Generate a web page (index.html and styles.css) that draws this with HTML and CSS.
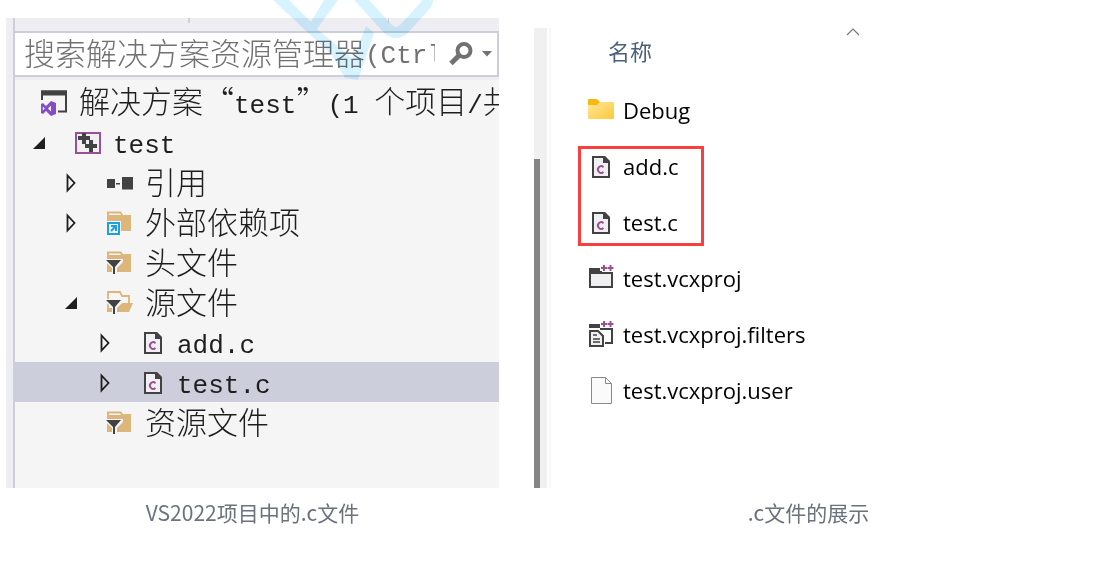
FILE: index.html
```html
<!DOCTYPE html>
<html lang="zh-CN">
<head>
    <meta charset="UTF-8">
    <meta name="viewport" content="width=device-width, initial-scale=1.0">
    <title>VS2022 .c文件</title>
    <link rel="stylesheet" href="styles.css">
</head>
<body>
    <!-- shared icons -->
    <svg class="sprite" aria-hidden="true">
        <symbol id="closed" viewBox="0 0 14 20"><path d="M3.500 2.500v15l7-7.500z" fill="none" stroke="#1e1e1e" stroke-width="1.800"/></symbol>
        <symbol id="open" viewBox="0 0 14 14"><path d="M13 1v12H1z" fill="#1e1e1e"/></symbol>
        <symbol id="cfile" viewBox="0 0 20 24">
            <path d="M2 2h11l5 5v15H2z" fill="#f0eff1" stroke="#424242" stroke-width="2"/>
            <path d="M12 1h2l5 5v2h-7z" fill="#424242"/>
            <path d="M12.500 12.200a3.300 3.300 0 1 0 0 4.800" fill="none" stroke="#9b4f96" stroke-width="1.900"/>
        </symbol>
        <symbol id="filter" viewBox="0 0 26 26">
            <path d="M1 6V1.500h14L17 4h8v18H1z" fill="#dcb67a"/>
            <path d="M3 3.500h11l1 1.500H3z" fill="#f5f5f5"/>
            <path d="M0 9h17v3l-6 6v7H6v-7l-6-6z" fill="#f5f5f5"/>
            <path d="M0 10h15l-6 7v7H7v-7z" fill="#424242"/>
        </symbol>
    </svg>

    <main class="gallery">
        <figure>
            <div class="solution">
                <div class="toolbar"></div>
                <div class="search">
                    <input id="search" type="text">
                    <label for="search">搜索解决方案资源管理器<span class="mono">(Ctrl+;)</span></label>
                    <button type="button" aria-label="搜索">
                        <svg width="26" height="26" viewBox="0 0 26 26"><circle cx="16" cy="9.500" r="6.500" fill="none" stroke="#717171" stroke-width="4"/><path d="M11.500 14L3 22.500" stroke="#717171" stroke-width="5"/></svg>
                    </button>
                    <button type="button" aria-label="搜索选项">
                        <svg width="10" height="6" viewBox="0 0 10 6"><path d="M0 0h10L5 5.500z" fill="#717171"/></svg>
                    </button>
                </div>
                <ul class="tree">
                    <li class="root">
                        <svg width="28" height="28" viewBox="0 0 28 28"><path d="M2 14V2.500h24v20h-8" fill="none" stroke="#424242" stroke-width="2"/><path d="M1 1.500h26v5H1z" fill="#424242"/><path d="M0 11h17v16H0z" fill="#f5f5f5"/><path d="M11 12l5 2v11l-5 2-5-5-3 3-2-1v-9l2-1 3 3zM11 16.500l-3 3 3 3zM2.800 17.500v4l2-2z" fill="#854cc7" fill-rule="evenodd"/></svg>
                        <span class="name">解决方案“<span class="mono">test</span>”<span class="mono">(1 </span>个项目<span class="mono">/</span>共</span>
                    </li>
                    <li class="level-1">
                        <svg class="arrow" width="14" height="14"><use href="#open"/></svg>
                        <svg width="28" height="24" viewBox="0 0 28 24"><path d="M2 2h24v20H2z" fill="#f0eff1" stroke="#9b4f96" stroke-width="2"/><path d="M10 2v11M4 7h12M17 9v12M11 15h12" stroke="#424242" stroke-width="4"/></svg>
                        <span class="name"><span class="mono">test</span></span>
                    </li>
                    <li class="level-2">
                        <svg class="arrow" width="14" height="20"><use href="#closed"/></svg>
                        <svg width="28" height="26" viewBox="0 0 28 26"><path d="M1 9h8v9H1zM10 13h4v1.500h-4zM16 7h11v12.500H16z" fill="#424242"/></svg>
                        <span class="name">引用</span>
                    </li>
                    <li class="level-2">
                        <svg class="arrow" width="14" height="20"><use href="#closed"/></svg>
                        <svg width="28" height="26" viewBox="0 0 28 26"><path d="M1 10V1.500h14L17 5h8v16H1z" fill="#dcb67a"/><path d="M3 3.500h11l1 1.500H3zM0 11h15v14H0z" fill="#f5f5f5"/><path d="M2 13h11v11H2z" fill="#f5f5f5" stroke="#1ba1e2" stroke-width="2"/><path d="M5 16h5v5M10 16l-5 5" fill="none" stroke="#1ba1e2" stroke-width="2"/></svg>
                        <span class="name">外部依赖项</span>
                    </li>
                    <li class="level-2">
                        <span class="arrow"></span>
                        <svg width="28" height="26" viewBox="0 0 28 26"><use href="#filter" width="26" height="26"/></svg>
                        <span class="name">头文件</span>
                    </li>
                    <li class="level-2">
                        <svg class="arrow" width="14" height="14"><use href="#open"/></svg>
                        <svg width="28" height="26" viewBox="0 0 28 26"><path d="M2 20V2h12l2 4h7v8" fill="none" stroke="#dcb67a" stroke-width="1.800"/><path d="M10 13h17l-4 9H1v-4h8z" fill="#dcb67a"/><path d="M0 9h17v3l-6 6v7H6v-7l-6-6z" fill="#f5f5f5"/><path d="M0 10h15l-6 7v7H7v-7z" fill="#424242"/></svg>
                        <span class="name">源文件</span>
                    </li>
                    <li class="level-3">
                        <svg class="arrow" width="14" height="20"><use href="#closed"/></svg>
                        <svg width="26" height="24"><use href="#cfile" x="3" width="20" height="24"/></svg>
                        <span class="name"><span class="mono">add.c</span></span>
                    </li>
                    <li class="level-3 selected">
                        <svg class="arrow" width="14" height="20"><use href="#closed"/></svg>
                        <svg width="26" height="24"><use href="#cfile" x="3" width="20" height="24"/></svg>
                        <span class="name"><span class="mono">test.c</span></span>
                    </li>
                    <li class="level-2">
                        <span class="arrow"></span>
                        <svg width="28" height="26" viewBox="0 0 28 26"><use href="#filter" width="26" height="26"/></svg>
                        <span class="name">资源文件</span>
                    </li>
                </ul>
            </div>
            <figcaption>VS2022项目中的.c文件</figcaption>
        </figure>

        <figure>
            <div class="explorer">
                <div class="scrollbar"><div class="thumb"></div></div>
                <div class="files">
                    <div class="column-head">
                        <span>名称</span>
                        <svg width="14" height="9" viewBox="0 0 14 9"><path d="M1 7l6-6 6 6" fill="none" stroke="#777" stroke-width="1.200"/></svg>
                    </div>
                    <ul>
                        <li>
                            <svg width="26" height="28" viewBox="0 0 26 28"><defs><linearGradient id="folder" x2="1" y2="1"><stop offset="0" stop-color="#ffe69c"/><stop offset="1" stop-color="#fcc938"/></linearGradient></defs><path d="M0 3q0-1 1-1h8l3 3v4H0z" fill="#f8b80e"/><path d="M0 8h9l3-3h13q1 0 1 1v15q0 1-1 1H1q-1 0-1-1z" fill="url(#folder)"/></svg>
                            Debug
                        </li>
                    </ul>
                    <ul class="marked">
                        <li><svg width="26" height="24"><use href="#cfile" x="3" width="20" height="24"/></svg>add.c</li>
                        <li><svg width="26" height="24"><use href="#cfile" x="3" width="20" height="24"/></svg>test.c</li>
                    </ul>
                    <ul>
                        <li>
                            <svg width="26" height="28" viewBox="0 0 26 28"><path d="M2 8h22v14H2z" fill="#f0eff1" stroke="#424242" stroke-width="2"/><path d="M1 3h11v3h2v3H1z" fill="#424242"/><path d="M12 0h14v6H12z" fill="#fff"/><path d="M16 0v6M13 3h6M22.500 0v6M19.500 3h6" stroke="#9b4f96" stroke-width="2"/></svg>
                            test.vcxproj
                        </li>
                        <li>
                            <svg width="26" height="28" viewBox="0 0 26 28"><path d="M1 3h11v4H1z" fill="#424242"/><path d="M12 8h12v14h-7" fill="none" stroke="#424242" stroke-width="2"/><path d="M2 10h8l5 5v10H2z" fill="#f0eff1" stroke="#424242" stroke-width="2"/><path d="M5 14h4M5 18h7M5 21h7" stroke="#424242" stroke-width="1.500"/><path d="M16 0v6M13 3h6M22.500 0v6M19.500 3h6" stroke="#9b4f96" stroke-width="2"/></svg>
                            test.vcxproj.filters
                        </li>
                        <li>
                            <svg width="26" height="28" viewBox="0 0 26 28"><path d="M3.500 .5h14l6 6v20h-20z" fill="#fafafa" stroke="#8a8a8a"/><path d="M17.500 .5v6h6" fill="none" stroke="#8a8a8a"/></svg>
                            test.vcxproj.user
                        </li>
                    </ul>
                </div>
            </div>
            <figcaption>.c文件的展示</figcaption>
        </figure>
    </main>

    <svg class="watermark" width="190" height="82" viewBox="0 0 190 82" aria-hidden="true">
        <path d="M13 0h16l22 22L64 0h14L57 29l36 30 13-33 8 7-16 47-13-2-13-23z" fill="#d6f3ff"/>
        <path d="M98-4l29 32q9 9 18 0l18-20q6-5 4-12" fill="none" stroke="#d6f3ff" stroke-width="11"/>
    </svg>
</body>
</html>
```
FILE: styles.css
```css
* {
    box-sizing: border-box;
}

body {
    position: relative;
    margin: 0;
    background: #fff;
    font-family: "Noto Sans CJK SC", sans-serif;
}

.sprite {
    display: none;
}

.gallery {
    display: grid;
    grid-template-columns: 493fr 549fr;
    align-items: end;
    gap: 35px;
    padding: 18px 33px 0 6px;
}

figure {
    margin: 0;
    min-width: 0;
}

figcaption {
    padding-top: 9px;
    text-align: center;
    font-size: 21px;
    line-height: 30px;
    color: #6b727c;
}

ul {
    list-style: none;
    margin: 0;
    padding: 0;
}

svg {
    flex: none;
}

/* Solution Explorer */
.solution {
    padding-left: 7px;
    padding-bottom: 46px;
    background: linear-gradient(to right, #eeeef2 7px, #cccedb 7px, #cccedb 9px, #f5f5f5 9px);
    font-size: 31px;
    font-weight: 300;
    color: #1e1e1e;
}

.toolbar {
    height: 13px;
    margin-left: 2px;
    background:
        linear-gradient(#cccedb, #cccedb) 173px 0 / 2px 5px no-repeat,
        linear-gradient(#cccedb, #cccedb) 373px 0 / 1px 5px no-repeat,
        #eeeef2;
}

.mono {
    font-family: "Liberation Mono", monospace;
    font-size: 26px;
    white-space: pre;
}

.search {
    position: relative;
    display: flex;
    align-items: center;
    height: 46px;
    padding-right: 1px;
    border: 2px solid #cccedb;
    background: #fff;
}

.search input {
    flex: 1;
    min-width: 0;
    height: 42px;
    border: 0;
    background: none;
}

.search label {
    position: absolute;
    top: 0;
    left: 9px;
    right: 62px;
    overflow: hidden;
    white-space: nowrap;
    line-height: 38px;
    color: #717171;
}

.search .mono {
    line-height: 30px;
    vertical-align: 2px;
}

.search button {
    display: flex;
    padding: 0 4px;
    border: 0;
    background: none;
}

.tree {
    margin-left: 2px;
    padding-top: 2px;
    border-top: 3px solid #eeeef2;
}

.tree li {
    display: flex;
    align-items: center;
    height: 40px;
    overflow: hidden;
    white-space: nowrap;
}

.tree li > svg {
    margin-top: 2px;
}

.tree li > svg:not(.arrow) {
    margin-right: 11px;
}

.name {
    padding-bottom: 2px;
    line-height: 38px;
}

.name .mono {
    line-height: 30px;
}

.tree .arrow {
    width: 14px;
    margin-right: 28px;
}

.root {
    padding-left: 25px;
}

.level-1 {
    padding-left: 17px;
}

.level-2 {
    padding-left: 49px;
}

.level-3 {
    padding-left: 83px;
}

.selected {
    background: #cccedb;
}

/* File Explorer */
.explorer {
    display: flex;
    font-family: "Open Sans", "Noto Sans CJK SC", sans-serif;
    font-size: 22px;
    color: #000;
}

.scrollbar {
    width: 13px;
    margin-right: 2px;
    padding-top: 131px;
    background: #f0f0f0;
}

.thumb {
    width: 6px;
    height: 100%;
    background: #858585;
}

.files {
    flex: 1;
    padding-bottom: 70px;
    border-left: 2px solid #f7f7f7;
}

.column-head {
    display: flex;
    height: 54px;
    padding-left: 57px;
    line-height: 46px;
    color: #4c607a;
}

.column-head svg {
    margin-left: 194px;
}

.files li {
    display: flex;
    align-items: center;
    gap: 9px;
    height: 56px;
    padding-left: 37px;
}

.files li svg {
    margin-top: 2px;
}

.marked {
    position: relative;
}

.marked::after {
    content: "";
    position: absolute;
    top: 8px;
    bottom: 4px;
    left: 27px;
    width: 120px;
    border: 3px solid #f93e3e;
}

.watermark {
    position: absolute;
    top: 0;
    left: 260px;
    mix-blend-mode: multiply;
    pointer-events: none;
}
```
